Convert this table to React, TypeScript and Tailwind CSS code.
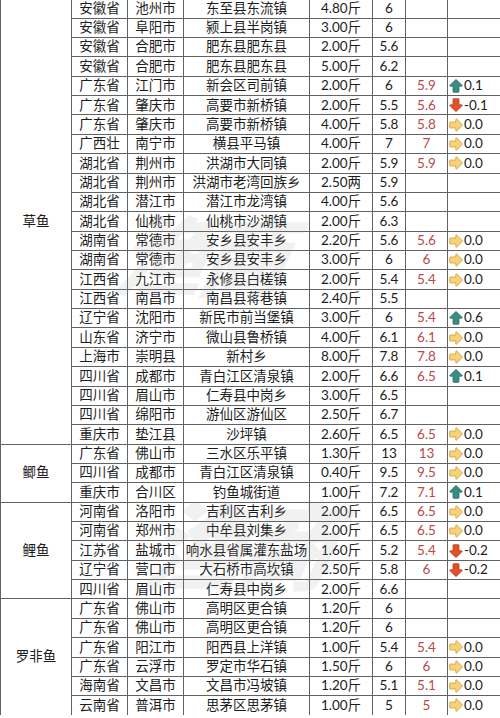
import React from "react";

type Trend = "up" | "down" | "flat";
type Row = [string, string, string, string, string, string?, Trend?, string?];

const groups: { name: string; span: string; rows: Row[] }[] = [
  {
    name: "草鱼",
    span: "row-span-23",
    rows: [
      ["安徽省", "池州市", "东至县东流镇", "4.80斤", "6"],
      ["安徽省", "阜阳市", "颍上县半岗镇", "3.00斤", "6"],
      ["安徽省", "合肥市", "肥东县肥东县", "2.00斤", "5.6"],
      ["安徽省", "合肥市", "肥东县肥东县", "5.00斤", "6.2"],
      ["广东省", "江门市", "新会区司前镇", "2.00斤", "6", "5.9", "up", "0.1"],
      ["广东省", "肇庆市", "高要市新桥镇", "2.00斤", "5.5", "5.6", "down", "-0.1"],
      ["广东省", "肇庆市", "高要市新桥镇", "4.00斤", "5.8", "5.8", "flat", "0.0"],
      ["广西壮", "南宁市", "横县平马镇", "4.00斤", "7", "7", "flat", "0.0"],
      ["湖北省", "荆州市", "洪湖市大同镇", "2.00斤", "5.9", "5.9", "flat", "0.0"],
      ["湖北省", "荆州市", "洪湖市老湾回族乡", "2.50两", "5.9"],
      ["湖北省", "潜江市", "潜江市龙湾镇", "4.00斤", "5.6"],
      ["湖北省", "仙桃市", "仙桃市沙湖镇", "2.00斤", "6.3"],
      ["湖南省", "常德市", "安乡县安丰乡", "2.20斤", "5.6", "5.6", "flat", "0.0"],
      ["湖南省", "常德市", "安乡县安丰乡", "3.00斤", "6", "6", "flat", "0.0"],
      ["江西省", "九江市", "永修县白槎镇", "2.00斤", "5.4", "5.4", "flat", "0.0"],
      ["江西省", "南昌市", "南昌县蒋巷镇", "2.40斤", "5.5"],
      ["辽宁省", "沈阳市", "新民市前当堡镇", "3.00斤", "6", "5.4", "up", "0.6"],
      ["山东省", "济宁市", "微山县鲁桥镇", "4.00斤", "6.1", "6.1", "flat", "0.0"],
      ["上海市", "崇明县", "新村乡", "8.00斤", "7.8", "7.8", "flat", "0.0"],
      ["四川省", "成都市", "青白江区清泉镇", "2.00斤", "6.6", "6.5", "up", "0.1"],
      ["四川省", "眉山市", "仁寿县中岗乡", "3.00斤", "6.5"],
      ["四川省", "绵阳市", "游仙区游仙区", "2.50斤", "6.7"],
      ["重庆市", "垫江县", "沙坪镇", "2.60斤", "6.5", "6.5", "flat", "0.0"],
    ],
  },
  {
    name: "鲫鱼",
    span: "row-span-3",
    rows: [
      ["广东省", "佛山市", "三水区乐平镇", "1.30斤", "13", "13", "flat", "0.0"],
      ["四川省", "成都市", "青白江区清泉镇", "0.40斤", "9.5", "9.5", "flat", "0.0"],
      ["重庆市", "合川区", "钓鱼城街道", "1.00斤", "7.2", "7.1", "up", "0.1"],
    ],
  },
  {
    name: "鲤鱼",
    span: "row-span-5",
    rows: [
      ["河南省", "洛阳市", "吉利区吉利乡", "2.00斤", "6.5", "6.5", "flat", "0.0"],
      ["河南省", "郑州市", "中牟县刘集乡", "2.00斤", "6.5", "6.5", "flat", "0.0"],
      ["江苏省", "盐城市", "响水县省属灌东盐场", "1.60斤", "5.2", "5.4", "down", "-0.2"],
      ["辽宁省", "营口市", "大石桥市高坎镇", "2.50斤", "5.8", "6", "down", "-0.2"],
      ["四川省", "眉山市", "仁寿县中岗乡", "2.00斤", "6.6"],
    ],
  },
  {
    name: "罗非鱼",
    span: "row-span-6",
    rows: [
      ["广东省", "佛山市", "高明区更合镇", "1.20斤", "6"],
      ["广东省", "佛山市", "高明区更合镇", "1.20斤", "6"],
      ["广东省", "阳江市", "阳西县上洋镇", "1.00斤", "5.4", "5.4", "flat", "0.0"],
      ["广东省", "云浮市", "罗定市华石镇", "1.50斤", "6", "6", "flat", "0.0"],
      ["海南省", "文昌市", "文昌市冯坡镇", "1.20斤", "5.1", "5.1", "flat", "0.0"],
      ["云南省", "普洱市", "思茅区思茅镇", "1.00斤", "5", "5", "flat", "0.0"],
    ],
  },
];

function Arrow({ trend }: { trend: Trend }) {
  const rotate = trend === "up" ? 0 : trend === "down" ? 180 : 90;
  const fill = trend === "up" ? "#3a8c7f" : trend === "down" ? "#dc5329" : "#f6d27a";
  const stroke = trend === "up" ? "#2f7a6e" : trend === "down" ? "#c8451f" : "#d9a03a";
  return (
    <svg width="14" height="14" viewBox="0 0 16 16" className="shrink-0">
      <path
        d="M8 0.8 Q8.6 0.8 9.2 1.5 L15 7.4 Q15.4 8.2 14.4 8.2 L11.4 8.2 L11.4 14.4 Q11.4 15.2 10.6 15.2 L5.4 15.2 Q4.6 15.2 4.6 14.4 L4.6 8.2 L1.6 8.2 Q0.6 8.2 1 7.4 L6.8 1.5 Q7.4 0.8 8 0.8 Z"
        fill={fill}
        stroke={stroke}
        strokeWidth="1"
        strokeLinejoin="round"
        transform={`rotate(${rotate} 8 8)`}
      />
    </svg>
  );
}

const cell = "bg-white flex items-center justify-center whitespace-nowrap overflow-hidden";

export default function App() {
  return (
    <div className="relative h-[718px] w-[500px] overflow-hidden bg-white">
      <div className="mt-[-0.7px] grid w-[520px] grid-cols-[70px_55px_55px_125px_62px_32px_41px_1fr] grid-rows-[repeat(37,18.36px)] gap-px border-l border-[#626262] bg-[#626262] font-['Lato','Noto_Sans_CJK_SC',sans-serif] text-[13.5px] leading-none text-[#1c1c1c]">
        {groups.map((g) => (
          <React.Fragment key={g.name}>
            <div className={`${cell} ${g.span}`}>{g.name}</div>
            {g.rows.map((r, i) => {
              const [prov, city, town, weight, price, prev, trend, diff] = r;
              return (
                <React.Fragment key={i}>
                  <div className={cell}>{prov}</div>
                  <div className={cell}>{city}</div>
                  <div className={cell}>{town}</div>
                  <div className={cell}>{weight}</div>
                  <div className={cell}>{price}</div>
                  <div className={`${cell} text-[#b84a4a]`}>{prev ?? ""}</div>
                  <div className="flex items-center gap-px bg-white pl-px">
                    {trend ? <Arrow trend={trend} /> : null}
                    {diff ? <span>{diff}</span> : null}
                  </div>
                </React.Fragment>
              );
            })}
          </React.Fragment>
        ))}
      </div>
      <div className="pointer-events-none absolute left-[120px] top-[186px] -skew-x-12 font-['Noto_Sans_CJK_SC',sans-serif] text-[88px] font-black italic tracking-[-6px] text-[#9a9a9a] opacity-[0.13]">
        渔商
      </div>
      <div className="pointer-events-none absolute left-[150px] top-[470px] -skew-x-12 font-['Noto_Sans_CJK_SC',sans-serif] text-[96px] font-black italic tracking-[-6px] text-[#9a9a9a] opacity-[0.13]">
        渔商
      </div>
    </div>
  );
}
